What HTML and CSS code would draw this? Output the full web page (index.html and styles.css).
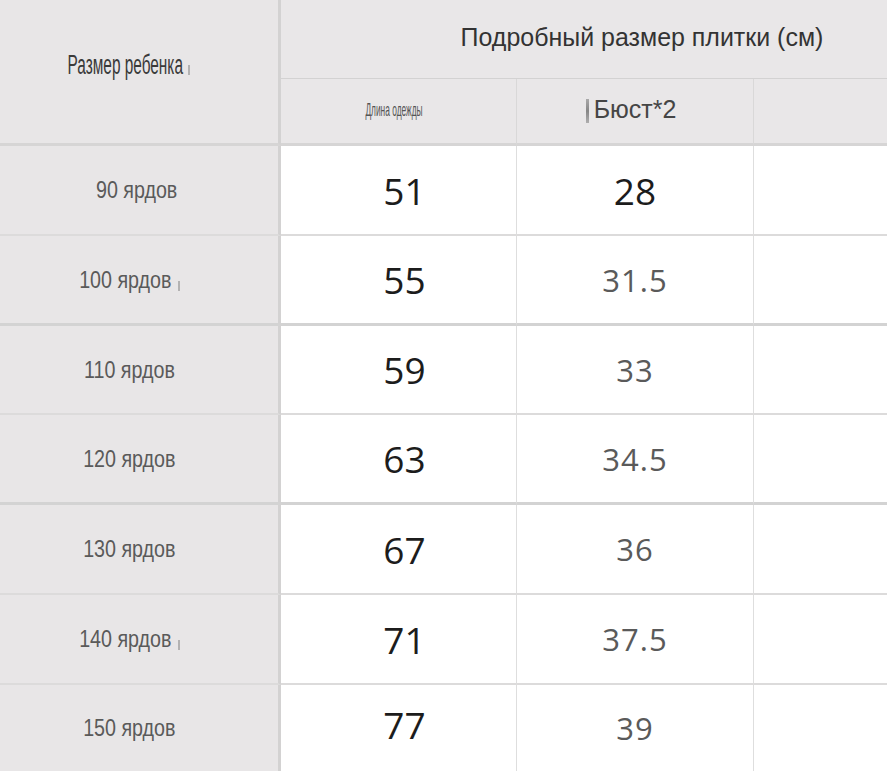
FILE: index.html
```html
<!DOCTYPE html>
<html lang="ru">
<head>
<meta charset="utf-8">
<title>Размер</title>
<link rel="stylesheet" href="styles.css">
</head>
<body>
<div class="sheet">
  <div class="cell corner"><span class="corner-text">Размер ребенка</span><span class="tick tick-corner"></span></div>
  <div class="cell title"><span class="title-text">Подробный размер плитки (см)</span></div>
  <div class="cell sub sub-len"><span class="len-text">Длина одежды</span></div>
  <div class="cell sub sub-bust"><span class="bar"></span><span class="bust-text">Бюст*2</span></div>
  <div class="cell sub sub-last"></div>

  <div class="cell side side-first"><span class="side-text">90 ярдов</span></div>
  <div class="cell num big">51</div>
  <div class="cell num mid dark">28</div>
  <div class="cell num last"></div>

  <div class="cell side strong"><span class="side-text">100 ярдов</span><span class="tick"></span></div>
  <div class="cell num big strong">55</div>
  <div class="cell num mid strong">31.5</div>
  <div class="cell num last strong"></div>

  <div class="cell side"><span class="side-text">110 ярдов</span></div>
  <div class="cell num big">59</div>
  <div class="cell num mid">33</div>
  <div class="cell num last"></div>

  <div class="cell side strong"><span class="side-text">120 ярдов</span></div>
  <div class="cell num big strong">63</div>
  <div class="cell num mid strong">34.5</div>
  <div class="cell num last strong"></div>

  <div class="cell side"><span class="side-text">130 ярдов</span></div>
  <div class="cell num big">67</div>
  <div class="cell num mid">36</div>
  <div class="cell num last"></div>

  <div class="cell side"><span class="side-text">140 ярдов</span><span class="tick"></span></div>
  <div class="cell num big">71</div>
  <div class="cell num mid">37.5</div>
  <div class="cell num last"></div>

  <div class="cell side bottom"><span class="side-text">150 ярдов</span></div>
  <div class="cell num big bottom lift">77</div>
  <div class="cell num mid bottom">39</div>
  <div class="cell num last bottom"></div>
</div>
</body>
</html>
```

FILE: styles.css
```css
* { box-sizing: border-box; }

html, body {
  margin: 0;
  padding: 0;
  background: #ffffff;
}

.sheet {
  display: grid;
  grid-template-columns: 281px 236px 237px 133px;
  grid-template-rows: 79px 67px 90px 90px 89px 90px 90px 90px 86px;
  width: 887px;
  height: 771px;
  overflow: hidden;
}

.cell {
  display: flex;
  align-items: center;
  justify-content: center;
  border-bottom: 2px solid #dcdbdb;
  white-space: nowrap;
}

/* header */
.corner {
  grid-row: 1 / span 2;
  background: #e8e6e7;
  border-right: 3px solid #d3d2d2;
  border-bottom: 3px solid #d6d5d5;
  padding: 0 20px 12px 0;
}

.corner-text {
  display: inline-block;
  font-family: "Liberation Sans", Arial, sans-serif;
  font-size: 27px;
  color: #3a3a3a;
  transform: scaleX(0.57);
  margin: 0 -44px;
}

.title {
  grid-column: 2 / span 3;
  background: #e9e7e8;
  border-bottom: 1px solid #d3d2d2;
  padding: 0 0 3px 116px;
}

.title-text {
  font-family: "Liberation Sans", Arial, sans-serif;
  font-size: 26px;
  color: #333333;
  display: inline-block;
  transform: scaleX(0.96);
}

.sub {
  background: #e9e7e8;
  border-bottom: 3px solid #d6d5d5;
}

.sub-len, .sub-bust {
  border-right: 1px solid #d9d8d8;
}

.sub-len { padding: 0 10px 2px 0; }

.len-text {
  display: inline-block;
  font-family: "Liberation Sans", Arial, sans-serif;
  font-size: 19px;
  color: #555555;
  transform: scaleX(0.44);
  margin: 0 -37px;
}

.sub-bust { padding: 0 8px 4px 0; }

.bar {
  display: inline-block;
  width: 3px;
  height: 24px;
  background: linear-gradient(#9a9a9a, #6e6e6e, #a0a0a0);
  margin: 4px 5px 0 0;
  opacity: 0.8;
}

.bust-text {
  font-family: "Liberation Sans", Arial, sans-serif;
  font-size: 25px;
  color: #454545;
}

/* left column */
.side {
  background: #e8e6e7;
  border-right: 3px solid #d3d2d2;
  padding-right: 20px;
}

.side-first {
  padding-right: 4px;
}

.side-text {
  display: inline-block;
  font-family: "Liberation Sans", Arial, sans-serif;
  font-size: 24px;
  color: #5a5a5a;
  transform: scaleX(0.82);
  margin: 0 -9px;
}

.tick {
  display: inline-block;
  width: 2px;
  height: 10px;
  background: #a5a5a5;
  margin: 12px 0 0 6px;
  opacity: 0.8;
}

.tick-corner {
  margin: 8px 0 0 6px;
}

/* data */
.num {
  background: #ffffff;
  font-family: "Open Sans", "Noto Sans", sans-serif;
  border-right: 1px solid #dedede;
}

.big {
  font-size: 37px;
  color: #1c1c1c;
  padding-left: 12px;
}

.lift {
  padding-bottom: 8px;
}

.mid {
  font-size: 31px;
  color: #5a5a5a;
  letter-spacing: 1px;
}

.mid.dark {
  font-size: 37px;
  color: #1c1c1c;
  letter-spacing: 0;
}

.last {
  border-right: none;
}

.strong {
  border-bottom: 3px solid #d3d3d3;
}

.bottom {
  border-bottom: none;
}
```
